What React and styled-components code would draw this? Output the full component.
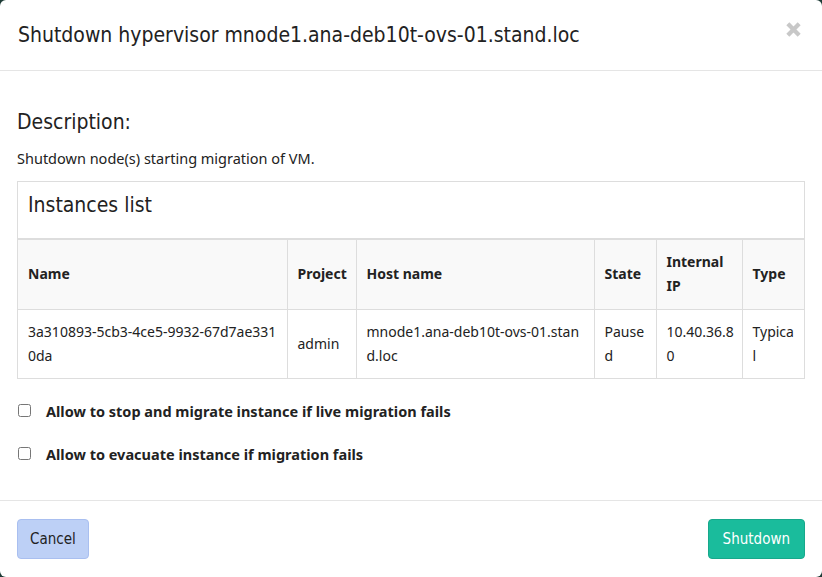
import React from "react";
import styled, { createGlobalStyle } from "styled-components";

const Global = createGlobalStyle`
  html, body { margin: 0; padding: 0; background: #1d3b36; }
  body { font-family: "Noto Sans", "Open Sans", sans-serif; color: #333; }
  * { box-sizing: border-box; }
`;

const headFont = `"DejaVu Sans Condensed", "Liberation Sans Narrow", sans-serif`;

const Modal = styled.div`
  width: 822px;
  height: 577px;
  background: #fff;
  border-radius: 6px;
  display: flex;
  flex-direction: column;
  overflow: hidden;
`;

const Header = styled.div`
  height: 71px;
  padding: 0 18px;
  border-bottom: 1px solid #e5e5e5;
  display: flex;
  align-items: center;
  justify-content: space-between;
`;

const Title = styled.h4`
  margin: 0;
  font-family: ${headFont};
  font-weight: 400;
  font-size: 21px;
  color: #222;
`;

const Close = styled.button`
  border: 0;
  background: none;
  padding: 0;
  margin-right: 2px;
  margin-top: -12px;
  display: flex;
  cursor: pointer;
`;

const Body = styled.div`
  flex: 1;
  padding: 39px 17px 0;
  border-bottom: 1px solid #e5e5e5;
`;

const H3 = styled.h3`
  margin: 0 0 14px;
  font-family: ${headFont};
  font-weight: 400;
  font-size: 21px;
  line-height: 24px;
  color: #222;
`;

const Text = styled.p`
  margin: 0 0 13px;
  font-size: 14.5px;
  line-height: 20px;
  color: #222;
`;

const Panel = styled.div`
  border: 1px solid #ddd;
`;

const PanelHeading = styled.div`
  padding: 11px 10px 21px;
  border-bottom: 2px solid #ddd;
  font-family: ${headFont};
  font-size: 21px;
  line-height: 24px;
  color: #222;
`;

const Table = styled.table`
  width: 100%;
  border-collapse: collapse;
  table-layout: fixed;
  font-size: 14px;
  line-height: 24px;
  color: #222;
`;

const Th = styled.th`
  text-align: left;
  font-weight: 700;
  background: #f9f9f9;
  padding: 10px;
  height: 69px;
  vertical-align: middle;
  white-space: ${(p) => (p.$wrap ? "normal" : "nowrap")};
  border-right: 1px solid #ddd;
  border-bottom: 1px solid #ddd;
  &:last-child { border-right: 0; }
`;

const Td = styled.td`
  padding: 10px ${(p) => (p.$snug ? "5px" : "10px")} 10px 10px;
  height: 68px;
  vertical-align: middle;
  border-right: 1px solid #ddd;
  word-break: break-all;
  &:last-child { border-right: 0; }
`;

const Options = styled.div`
  padding-top: 22px;
  display: flex;
  flex-direction: column;
  gap: 23px;
`;

const CheckRow = styled.label`
  display: flex;
  align-items: center;
  gap: 15px;
  font-weight: 700;
  font-size: 14.5px;
  line-height: 20px;
  color: #222;
  padding-left: 1px;
`;

const Box = styled.input`
  margin: 0;
  width: 13px;
  height: 13px;
`;

const Footer = styled.div`
  height: 76px;
  padding: 0 17px;
  display: flex;
  align-items: center;
  justify-content: space-between;
`;

const Button = styled.button`
  height: 40px;
  padding: 0 ${(p) => (p.$primary ? "14px" : "12px")};
  border-radius: 4px;
  border: 1px solid ${(p) => (p.$primary ? "#17a88b" : "#a9bff0")};
  background: ${(p) => (p.$primary ? "#1abc9c" : "#bdd0f6")};
  color: ${(p) => (p.$primary ? "#fff" : "#222")};
  font-family: ${headFont};
  font-size: 15px;
  cursor: pointer;
`;

const cols = [269, 69, 238, 62, 86, 62];

export default function App() {
  return (
    <>
      <Global />
      <Modal>
        <Header>
          <Title>Shutdown hypervisor mnode1.ana-deb10t-ovs-01.stand.loc</Title>
          <Close aria-label="close">
            <svg width="17" height="17" viewBox="0 0 18 18">
              <path d="M3 3 L15 15 M15 3 L3 15" stroke="#c8c8c8" strokeWidth="4.5" strokeLinecap="butt" />
            </svg>
          </Close>
        </Header>
        <Body>
          <H3>Description:</H3>
          <Text>Shutdown node(s) starting migration of VM.</Text>
          <Panel>
            <PanelHeading>Instances list</PanelHeading>
            <Table>
              <colgroup>
                {cols.map((w, i) => (
                  <col key={i} style={{ width: w }} />
                ))}
              </colgroup>
              <thead>
                <tr>
                  <Th>Name</Th>
                  <Th>Project</Th>
                  <Th>Host name</Th>
                  <Th>State</Th>
                  <Th $wrap>Internal IP</Th>
                  <Th>Type</Th>
                </tr>
              </thead>
              <tbody>
                <tr>
                  <Td>3a310893-5cb3-4ce5-9932-67d7ae3310da</Td>
                  <Td>admin</Td>
                  <Td>mnode1.ana-deb10t-ovs-01.stand.loc</Td>
                  <Td>Paused</Td>
                  <Td $snug>10.40.36.80</Td>
                  <Td>Typical</Td>
                </tr>
              </tbody>
            </Table>
          </Panel>
          <Options>
            <CheckRow>
              <Box type="checkbox" />
              Allow to stop and migrate instance if live migration fails
            </CheckRow>
            <CheckRow>
              <Box type="checkbox" />
              Allow to evacuate instance if migration fails
            </CheckRow>
          </Options>
        </Body>
        <Footer>
          <Button>Cancel</Button>
          <Button $primary>Shutdown</Button>
        </Footer>
      </Modal>
    </>
  );
}
